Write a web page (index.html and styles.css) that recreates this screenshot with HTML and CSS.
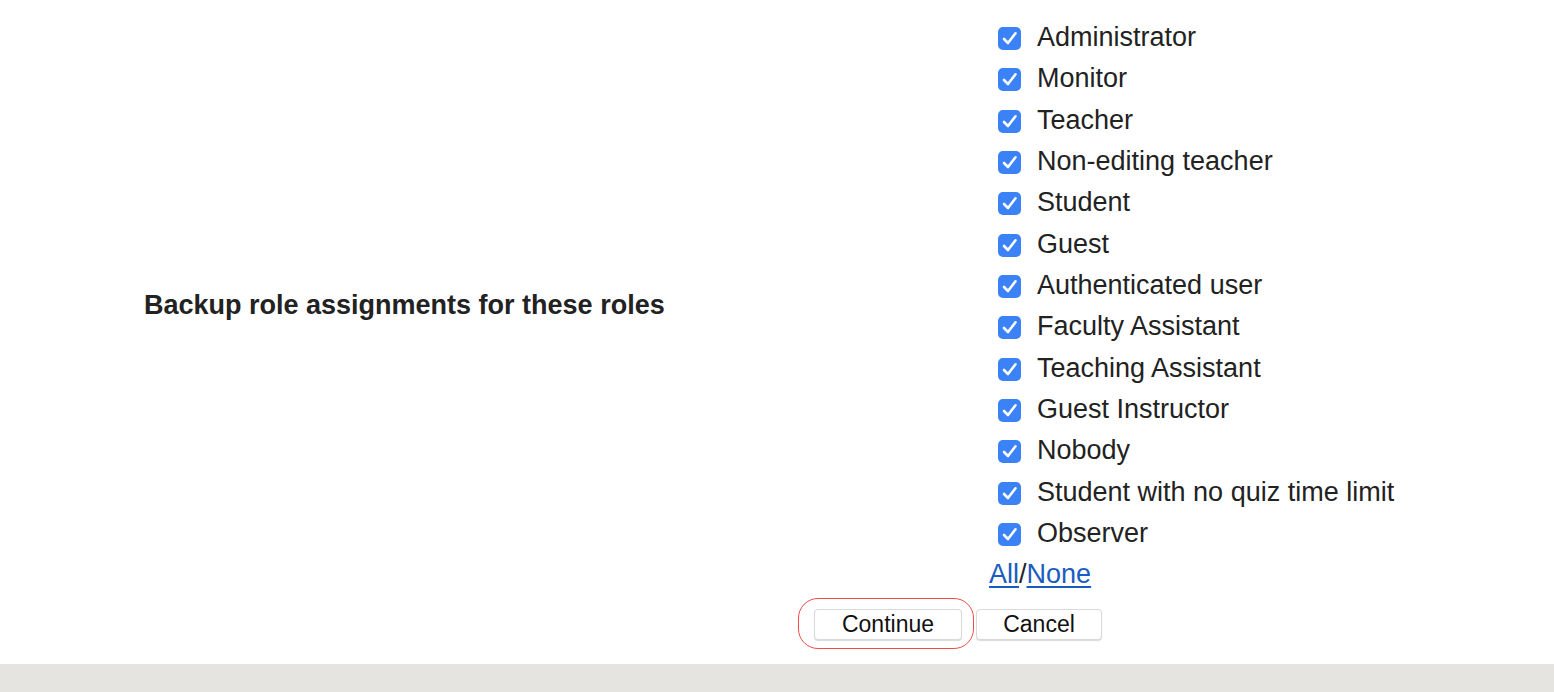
FILE: index.html
```html
<!DOCTYPE html>
<html>
<head>
<meta charset="utf-8">
<link rel="stylesheet" href="styles.css">
</head>
<body>
<div class="page">
  <form class="form">
    <div class="fitem">
      <div class="flabel">Backup role assignments for these roles</div>
      <div class="felement">
        <ul class="roles">
          <li><span class="cb"><svg viewBox="0 0 23 23"><path d="M6 12 L10 16 L17.5 6.3" /></svg></span>Administrator</li>
          <li><span class="cb"><svg viewBox="0 0 23 23"><path d="M6 12 L10 16 L17.5 6.3" /></svg></span>Monitor</li>
          <li><span class="cb"><svg viewBox="0 0 23 23"><path d="M6 12 L10 16 L17.5 6.3" /></svg></span>Teacher</li>
          <li><span class="cb"><svg viewBox="0 0 23 23"><path d="M6 12 L10 16 L17.5 6.3" /></svg></span>Non-editing teacher</li>
          <li><span class="cb"><svg viewBox="0 0 23 23"><path d="M6 12 L10 16 L17.5 6.3" /></svg></span>Student</li>
          <li><span class="cb"><svg viewBox="0 0 23 23"><path d="M6 12 L10 16 L17.5 6.3" /></svg></span>Guest</li>
          <li><span class="cb"><svg viewBox="0 0 23 23"><path d="M6 12 L10 16 L17.5 6.3" /></svg></span>Authenticated user</li>
          <li><span class="cb"><svg viewBox="0 0 23 23"><path d="M6 12 L10 16 L17.5 6.3" /></svg></span>Faculty Assistant</li>
          <li><span class="cb"><svg viewBox="0 0 23 23"><path d="M6 12 L10 16 L17.5 6.3" /></svg></span>Teaching Assistant</li>
          <li><span class="cb"><svg viewBox="0 0 23 23"><path d="M6 12 L10 16 L17.5 6.3" /></svg></span>Guest Instructor</li>
          <li><span class="cb"><svg viewBox="0 0 23 23"><path d="M6 12 L10 16 L17.5 6.3" /></svg></span>Nobody</li>
          <li><span class="cb"><svg viewBox="0 0 23 23"><path d="M6 12 L10 16 L17.5 6.3" /></svg></span>Student with no quiz time limit</li>
          <li><span class="cb"><svg viewBox="0 0 23 23"><path d="M6 12 L10 16 L17.5 6.3" /></svg></span>Observer</li>
        </ul>
        <div class="allnone"><a href="#">All</a>/<a href="#">None</a></div>
      </div>
    </div>
    <div class="buttons">
      <span class="hl-wrap"><button type="button" class="btn btn-continue">Continue</button><span class="highlight"></span></span>
      <button type="button" class="btn btn-cancel">Cancel</button>
    </div>
  </form>
</div>
<footer class="footer"></footer>
</body>
</html>
```

FILE: styles.css
```css
html, body {
  margin: 0;
  padding: 0;
  background: #ffffff;
}
body {
  font-family: "Liberation Sans", Arial, Helvetica, sans-serif;
  color: #222222;
  overflow: hidden;
}
.page {
  height: 664px;
  box-sizing: border-box;
  padding-top: 17px;
}
.fitem {
  display: flex;
  align-items: center;
}
.flabel {
  flex: none;
  width: 989px;
  box-sizing: border-box;
  padding-left: 144px;
  padding-bottom: 1px;
  font-weight: bold;
  font-size: 27px;
  color: #222222;
}
.felement {
  display: flex;
  flex-direction: column;
}
.roles {
  list-style: none;
  margin: 0;
  padding: 0;
}
.roles li {
  height: 41.33px;
  display: flex;
  align-items: center;
  font-size: 27px;
  color: #222222;
  padding-left: 9px;
  white-space: nowrap;
}
.cb {
  width: 23px;
  height: 23px;
  border-radius: 5px;
  background: #3a82f6;
  margin-right: 16px;
  margin-top: 2px;
  display: flex;
  flex: none;
}
.cb svg {
  width: 23px;
  height: 23px;
}
.cb path {
  fill: none;
  stroke: #ffffff;
  stroke-width: 2.6;
  stroke-linecap: round;
  stroke-linejoin: round;
}
.allnone {
  height: 41.33px;
  display: flex;
  align-items: center;
  font-size: 27px;
  color: #222222;
}
.allnone a {
  color: #1a5cc0;
  text-decoration: underline;
  text-decoration-thickness: 2px;
  text-underline-offset: 3px;
}
.buttons {
  display: flex;
  gap: 14px;
  padding-left: 814px;
  margin-top: 13px;
}
.hl-wrap {
  position: relative;
  display: flex;
}
.btn {
  height: 31px;
  background: #ffffff;
  border: 1px solid #d9d9d9;
  border-radius: 4px;
  box-shadow: 0 1px 1px rgba(0, 0, 0, 0.15);
  font-family: "Liberation Sans", Arial, Helvetica, sans-serif;
  font-size: 23px;
  color: #111111;
  padding: 0;
  line-height: 29px;
}
.btn-continue {
  width: 148px;
}
.btn-cancel {
  width: 126px;
}
.highlight {
  position: absolute;
  left: -16px;
  top: -11px;
  width: 174px;
  height: 49px;
  border: 1.5px solid #ef4b4b;
  border-radius: 20px;
  pointer-events: none;
}
.footer {
  height: 28px;
  background: #e5e4e0;
}
```
